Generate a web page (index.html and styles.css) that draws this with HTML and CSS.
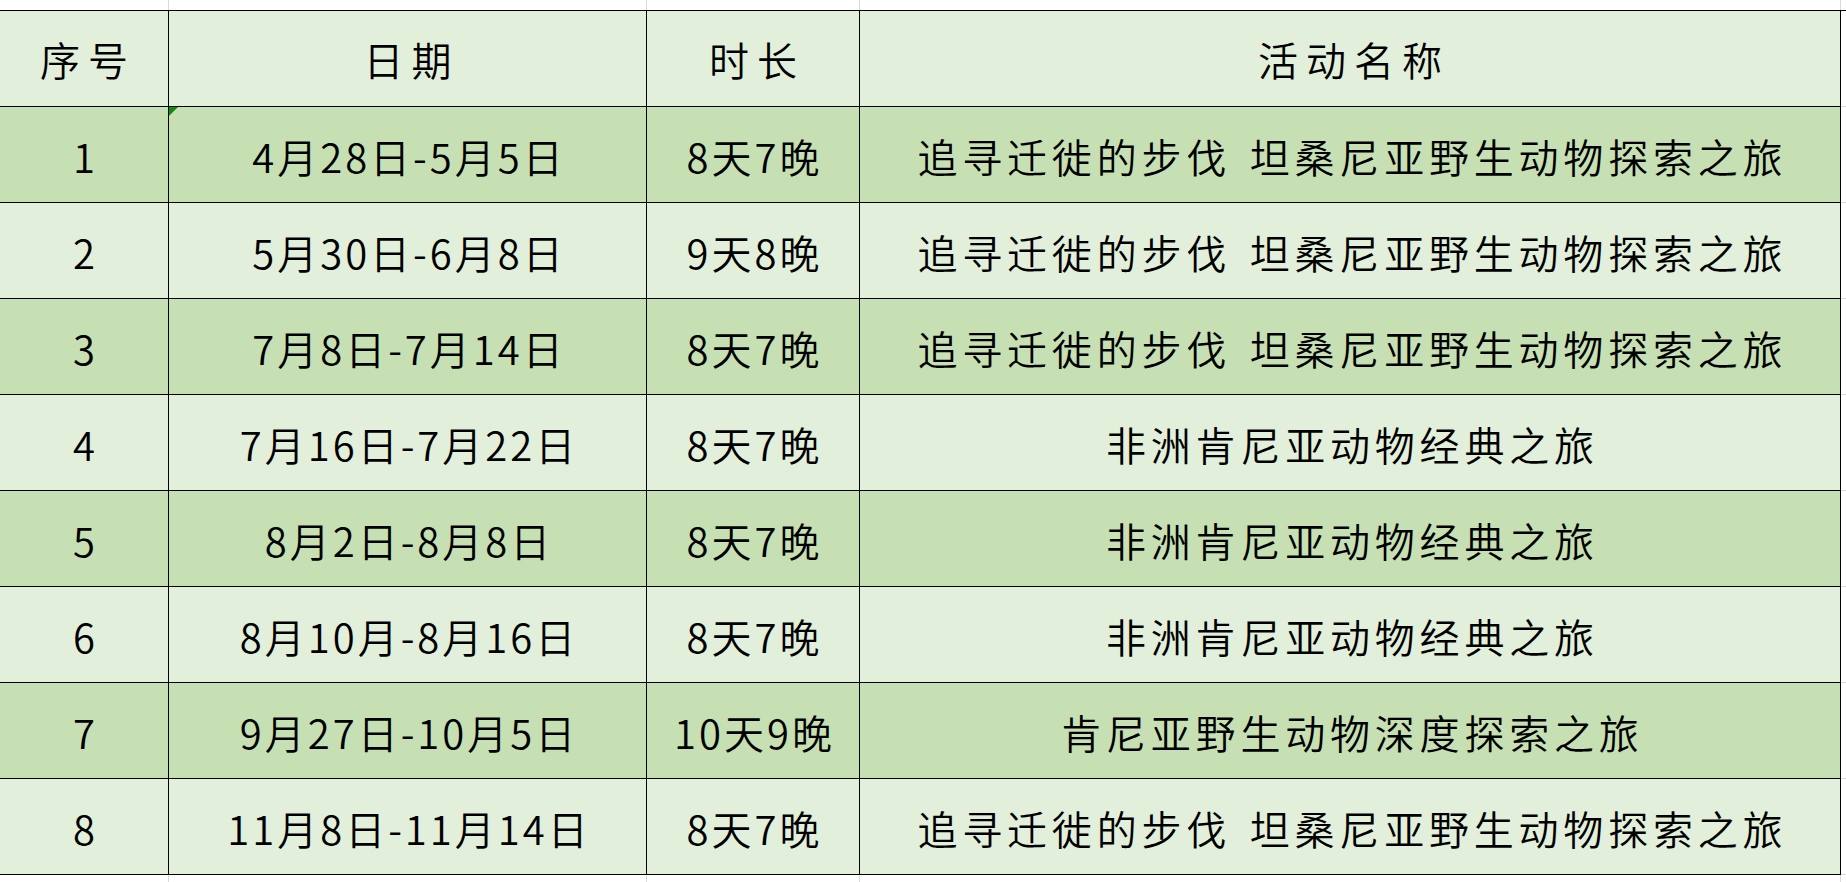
FILE: index.html
```html
<!DOCTYPE html>
<html lang="zh-CN">
<head>
<meta charset="utf-8">
<title>活动日程</title>
<link rel="stylesheet" href="styles.css">
</head>
<body>
<div class="sheet">
  <div class="strip strip-top">
    <div class="gc"></div><div class="gc"></div><div class="gc"></div><div class="gc"></div><div class="gc last"></div>
  </div>
  <div class="table">
    <div class="row head">
      <div class="cell"><span class="t">序号</span></div>
      <div class="cell"><span class="t">日期</span></div>
      <div class="cell"><span class="t">时长</span></div>
      <div class="cell"><span class="t">活动名称</span></div>
      <div class="out"></div>
    </div>
    <div class="row dark">
      <div class="cell"><span class="t">1</span></div>
      <div class="cell flagged"><span class="flag"></span><span class="t">4月28日-5月5日</span></div>
      <div class="cell"><span class="t">8天7晚</span></div>
      <div class="cell name"><span class="t">追寻迁徙的步伐 坦桑尼亚野生动物探索之旅</span></div>
      <div class="out"></div>
    </div>
    <div class="row light">
      <div class="cell"><span class="t">2</span></div>
      <div class="cell"><span class="t">5月30日-6月8日</span></div>
      <div class="cell"><span class="t">9天8晚</span></div>
      <div class="cell name"><span class="t">追寻迁徙的步伐 坦桑尼亚野生动物探索之旅</span></div>
      <div class="out"></div>
    </div>
    <div class="row dark">
      <div class="cell"><span class="t">3</span></div>
      <div class="cell"><span class="t">7月8日-7月14日</span></div>
      <div class="cell"><span class="t">8天7晚</span></div>
      <div class="cell name"><span class="t">追寻迁徙的步伐 坦桑尼亚野生动物探索之旅</span></div>
      <div class="out"></div>
    </div>
    <div class="row light">
      <div class="cell"><span class="t">4</span></div>
      <div class="cell"><span class="t">7月16日-7月22日</span></div>
      <div class="cell"><span class="t">8天7晚</span></div>
      <div class="cell name"><span class="t">非洲肯尼亚动物经典之旅</span></div>
      <div class="out"></div>
    </div>
    <div class="row dark">
      <div class="cell"><span class="t">5</span></div>
      <div class="cell"><span class="t">8月2日-8月8日</span></div>
      <div class="cell"><span class="t">8天7晚</span></div>
      <div class="cell name"><span class="t">非洲肯尼亚动物经典之旅</span></div>
      <div class="out"></div>
    </div>
    <div class="row light">
      <div class="cell"><span class="t">6</span></div>
      <div class="cell"><span class="t">8月10月-8月16日</span></div>
      <div class="cell"><span class="t">8天7晚</span></div>
      <div class="cell name"><span class="t">非洲肯尼亚动物经典之旅</span></div>
      <div class="out"></div>
    </div>
    <div class="row dark">
      <div class="cell"><span class="t">7</span></div>
      <div class="cell"><span class="t">9月27日-10月5日</span></div>
      <div class="cell"><span class="t">10天9晚</span></div>
      <div class="cell name"><span class="t">肯尼亚野生动物深度探索之旅</span></div>
      <div class="out"></div>
    </div>
    <div class="row light">
      <div class="cell"><span class="t">8</span></div>
      <div class="cell"><span class="t">11月8日-11月14日</span></div>
      <div class="cell"><span class="t">8天7晚</span></div>
      <div class="cell name"><span class="t">追寻迁徙的步伐 坦桑尼亚野生动物探索之旅</span></div>
      <div class="out"></div>
    </div>
  </div>
  <div class="strip strip-bottom">
    <div class="gc"></div><div class="gc"></div><div class="gc"></div><div class="gc"></div><div class="gc last"></div>
  </div>
</div>
</body>
</html>
```

FILE: styles.css
```css
html, body {
  margin: 0;
  padding: 0;
  background: #ffffff;
}

body {
  width: 1846px;
  height: 882px;
  overflow: hidden;
  font-family: "Noto Sans CJK SC", "Noto Sans", sans-serif;
  font-weight: 350;
  color: #000000;
}

.sheet {
  display: flex;
  flex-direction: column;
}

.strip {
  display: grid;
  grid-template-columns: 169px 478px 213px 981px 1fr;
}

.strip-top {
  height: 10px;
}

.strip-bottom {
  height: 8px;
}

.gc {
  border-right: 1px solid #d9d9d9;
}

.gc.last {
  border-right: none;
}

.table {
  border-top: 1px solid #000000;
}

.row {
  display: grid;
  grid-template-columns: 169px 478px 213px 981px 1fr;
  height: 96px;
}

.cell {
  box-sizing: border-box;
  border-right: 1px solid #000000;
  border-bottom: 1px solid #000000;
  display: flex;
  align-items: center;
  justify-content: center;
  padding-top: 3px;
  font-size: 40px;
  line-height: 1;
  white-space: nowrap;
  letter-spacing: 3px;
}

.cell .t {
  padding-left: 3px;
}

.cell.name {
  letter-spacing: 4.8px;
  word-spacing: 5px;
}

.cell.name .t {
  padding-left: 4.8px;
}

.out {
  box-sizing: border-box;
  border-bottom: 1px solid #d9d9d9;
  background: #ffffff;
}

.head .cell {
  background: #e2efda;
  letter-spacing: 8px;
  padding-top: 0;
}

.head .cell .t {
  padding-left: 8px;
}

.dark .cell {
  background: #c6e0b4;
}

.light .cell {
  background: #e2efda;
}

.flagged {
  position: relative;
}

.flag {
  position: absolute;
  top: 0;
  left: 0;
  width: 0;
  height: 0;
  border-top: 9px solid #128a12;
  border-right: 9px solid transparent;
}
```
